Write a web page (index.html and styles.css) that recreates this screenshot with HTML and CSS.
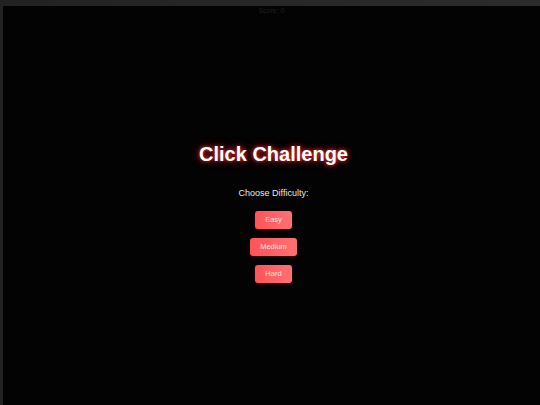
FILE: index.html
```html
<!DOCTYPE html>
<html>
<head>
<meta charset="utf-8">
<link rel="stylesheet" href="styles.css">
</head>
<body>
<div class="game">
  <div class="score">Score: 0</div>
  <div class="menu">
    <h1 class="title">Click Challenge</h1>
    <p class="prompt">Choose Difficulty:</p>
    <div class="buttons">
      <button class="btn">Easy</button>
      <button class="btn">Medium</button>
      <button class="btn">Hard</button>
    </div>
  </div>
</div>
</body>
</html>
```
FILE: styles.css
```css
html, body {
  margin: 0;
  padding: 0;
  height: 100%;
}
body {
  background: linear-gradient(90deg, #222222, #2c2c2c);
  font-family: "Liberation Sans", Arial, sans-serif;
  overflow: hidden;
}
.game {
  margin: 6px 0 0 3px;
  height: 399px;
  background: #030303;
  display: flex;
  flex-direction: column;
  align-items: center;
}
.score {
  font-size: 7px;
  line-height: 10px;
  color: #1f1f1f;
}
.menu {
  margin-top: 127px;
  margin-left: 4px;
  display: flex;
  flex-direction: column;
  align-items: center;
}
.title {
  margin: 0;
  font-size: 20px;
  line-height: 23px;
  font-weight: bold;
  color: #ffffff;
  text-shadow: 0 0 4px #ff3b3b, 0 0 8px rgba(255, 0, 0, 0.6);
}
.prompt {
  margin: 22px 0 0 0;
  font-size: 9px;
  line-height: 11px;
  color: #e6e6e6;
}
.buttons {
  margin-top: 12px;
  display: flex;
  flex-direction: column;
  align-items: center;
  gap: 9px;
}
.btn {
  font-family: "Liberation Sans", Arial, sans-serif;
  font-size: 7.5px;
  line-height: 10px;
  padding: 4px 10px;
  border: none;
  border-radius: 3px;
  color: #fbe3e3;
  background: linear-gradient(90deg, #ff5357, #ff7272);
  box-shadow: 0 1px 3px rgba(255, 60, 60, 0.25);
}
```
